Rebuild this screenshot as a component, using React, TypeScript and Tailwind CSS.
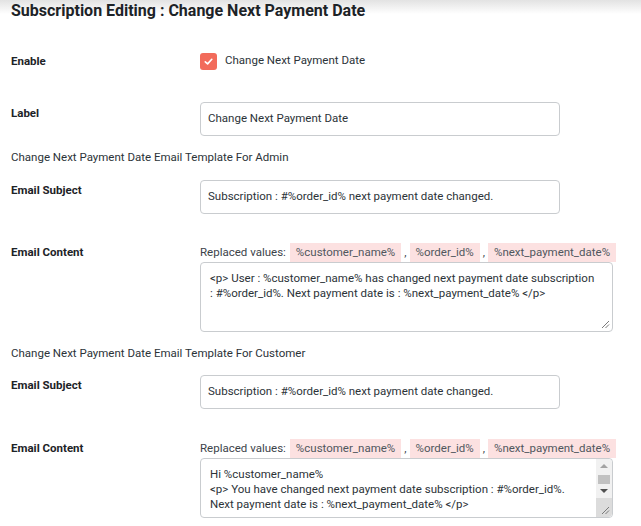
const chips = ['%customer_name%', '%order_id%', '%next_payment_date%'];

function ReplacedValues() {
  return (
    <div className="flex items-center h-[19px] text-[11.5px] text-[#3c434a] whitespace-nowrap">
      <span className="mr-[4px]">Replaced values:</span>
      {chips.map((c, i) => (
        <span key={c} className="flex items-center">
          <span className="bg-[#fce1e1] px-[6px] h-[19px] leading-[19px] text-[#50575e]">{c}</span>
          {i < chips.length - 1 && <span className="px-[3px]">,</span>}
        </span>
      ))}
    </div>
  );
}

function Label({ children, className = '' }: { children: React.ReactNode; className?: string }) {
  return (
    <div className={`w-[189px] shrink-0 text-[11.5px] font-bold text-[#1d2327] leading-[18px] ${className}`}>
      {children}
    </div>
  );
}

function TextInput({ value }: { value: string }) {
  return (
    <div className="w-[360px] h-[34px] border border-[#c9cccf] rounded-[4px] px-[7px] flex items-center text-[11.5px] text-[#2c3338] whitespace-nowrap">
      {value}
    </div>
  );
}

function Grip() {
  return (
    <svg className="absolute right-[2px] bottom-[2px]" width="9" height="9" viewBox="0 0 9 9">
      <path d="M1 8 L8 1 M4.5 8 L8 4.5" stroke="#7a7a7a" strokeWidth="1" />
    </svg>
  );
}

function ScrollBar() {
  return (
    <div className="w-[16px] flex flex-col bg-[#f1f1f1] rounded-r-[4px]">
      <div className="h-[14px] flex items-center justify-center">
        <div className="w-0 h-0 border-l-[4px] border-r-[4px] border-b-[4px] border-l-transparent border-r-transparent border-b-[#a3a3a3]" />
      </div>
      <div className="h-[9px] mx-[2px] mt-[2px] bg-[#c1c1c1]" />
      <div className="h-[14px] flex items-center justify-center">
        <div className="w-0 h-0 border-l-[4px] border-r-[4px] border-t-[4px] border-l-transparent border-r-transparent border-t-[#505050]" />
      </div>
      <div className="flex-1 bg-[#dcdcdc] relative rounded-br-[4px]">
        <Grip />
      </div>
    </div>
  );
}

function TextArea({ lines, scroll = false, height }: { lines: string[]; scroll?: boolean; height: string }) {
  return (
    <div className={`w-[413px] ${height} border border-[#c9cccf] rounded-[4px] flex text-[11.5px] text-[#2c3338] relative overflow-hidden`}>
      <div className="flex-1 pl-[9px] pr-[6px] pt-[8px] leading-[15px] whitespace-nowrap">
        {lines.map((l) => (
          <div key={l}>{l}</div>
        ))}
      </div>
      {scroll ? <ScrollBar /> : <Grip />}
    </div>
  );
}

export default function App() {
  return (
    <div className="relative min-h-screen bg-white font-['Roboto','Liberation_Sans',sans-serif] overflow-hidden">
      <div className="absolute top-0 left-0 right-0 h-[14px] bg-gradient-to-b from-[#d6d6d6] to-transparent opacity-70" />
      <div className="relative px-[11px]">
        <h1 className="text-[16px] font-bold text-[#1d2327] leading-[22px]">
          Subscription Editing : Change Next Payment Date
        </h1>

        <div className="flex items-center mt-[30px] h-[18px]">
          <Label>Enable</Label>
          <div className="flex items-center gap-[8px]">
            <div className="w-[17px] h-[17px] rounded-[3px] bg-[#f26b5b] flex items-center justify-center">
              <svg width="11" height="11" viewBox="0 0 12 12">
                <path d="M2.5 6.3 L5 8.6 L9.6 3.6" fill="none" stroke="white" strokeWidth="1.8" strokeLinecap="round" strokeLinejoin="round" />
              </svg>
            </div>
            <span className="text-[11.5px] text-[#2c3338]">Change Next Payment Date</span>
          </div>
        </div>

        <div className="flex items-start mt-[32px]">
          <Label className="pt-[2px]">Label</Label>
          <TextInput value="Change Next Payment Date" />
        </div>

        <div className="mt-[12px] text-[11.5px] text-[#2c3338] leading-[18px]">
          Change Next Payment Date Email Template For Admin
        </div>

        <div className="flex items-start mt-[14px]">
          <Label className="pt-[1px]">Email Subject</Label>
          <TextInput value="Subscription : #%order_id% next payment date changed." />
        </div>

        <div className="flex items-start mt-[29px]">
          <Label>Email Content</Label>
          <div className="flex flex-col">
            <ReplacedValues />
            <TextArea
              height="h-[70px]"
              lines={[
                '<p> User : %customer_name% has changed next payment date subscription',
                ': #%order_id%. Next payment date is : %next_payment_date% </p>',
              ]}
            />
          </div>
        </div>

        <div className="mt-[12px] text-[11.5px] text-[#2c3338] leading-[18px]">
          Change Next Payment Date Email Template For Customer
        </div>

        <div className="flex items-start mt-[13px]">
          <Label className="pt-[1px]">Email Subject</Label>
          <TextInput value="Subscription : #%order_id% next payment date changed." />
        </div>

        <div className="flex items-start mt-[30px]">
          <Label>Email Content</Label>
          <div className="flex flex-col">
            <ReplacedValues />
            <TextArea
              height="h-[60px]"
              scroll
              lines={[
                'Hi %customer_name%',
                '<p> You have changed next payment date subscription : #%order_id%.',
                'Next payment date is : %next_payment_date% </p>',
              ]}
            />
          </div>
        </div>
      </div>
    </div>
  );
}
